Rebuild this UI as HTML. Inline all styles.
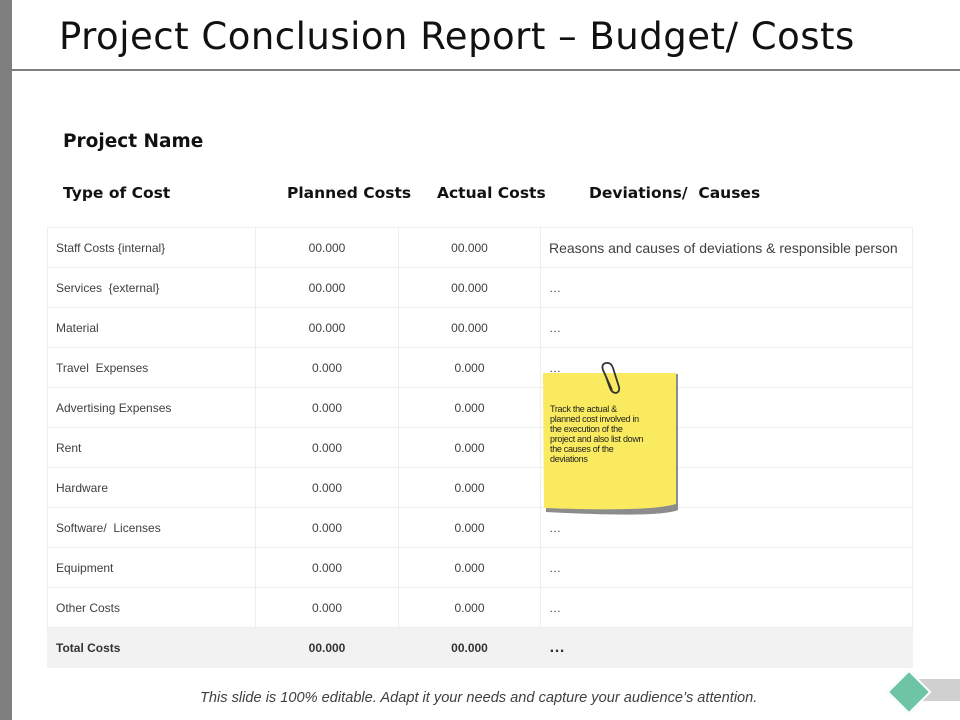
<!DOCTYPE html>
<html><head><meta charset="utf-8"><style>
body{margin:0;width:960px;height:720px;position:relative;background:#fff;overflow:hidden;font-family:"Liberation Sans",Arial,sans-serif}
.abs{position:absolute}
.bar{left:0;top:0;width:12px;height:720px;background:#7f7f7f}
.title{left:59px;top:15px;font-family:"DejaVu Sans",sans-serif;font-size:37px;color:#111;white-space:nowrap;letter-spacing:0.5px}
.hline{left:12px;top:69px;width:948px;height:2px;background:#7f7f7f}
.h{font-family:"DejaVu Sans",sans-serif;font-weight:bold;font-size:15.5px;color:#111;white-space:nowrap}
table{position:absolute;left:47px;top:227px;border-collapse:collapse;width:866px}
td{height:40px;border:1px solid #eee;font-size:12px;color:#404040;padding:0 8px;box-sizing:border-box}
td.c{text-align:center}
tr.tot td{background:#f2f2f2;font-weight:bold;color:#333;border-color:#f2f2f2}
</style></head><body>
<div class="abs bar"></div>
<div class="abs title">Project Conclusion Report – Budget/ Costs</div>
<div class="abs hline"></div>
<div class="abs h" style="left:63px;top:131px;font-size:18.5px">Project Name</div>
<div class="abs h" style="left:63px;top:184px">Type of Cost</div>
<div class="abs h" style="left:287px;top:184px">Planned Costs</div>
<div class="abs h" style="left:437px;top:184px">Actual Costs</div>
<div class="abs h" style="left:589px;top:184px">Deviations/&nbsp; Causes</div>
<table>
<colgroup><col style="width:208px"><col style="width:143px"><col style="width:142px"><col></colgroup>
<tr><td>Staff Costs {internal}</td><td class="c">00.000</td><td class="c">00.000</td><td style="font-size:14px">Reasons and causes of deviations &amp; responsible person</td></tr>
<tr><td>Services&nbsp; {external}</td><td class="c">00.000</td><td class="c">00.000</td><td>…</td></tr>
<tr><td>Material</td><td class="c">00.000</td><td class="c">00.000</td><td>…</td></tr>
<tr><td>Travel&nbsp; Expenses</td><td class="c">0.000</td><td class="c">0.000</td><td>…</td></tr>
<tr><td>Advertising Expenses</td><td class="c">0.000</td><td class="c">0.000</td><td>…</td></tr>
<tr><td>Rent</td><td class="c">0.000</td><td class="c">0.000</td><td>…</td></tr>
<tr><td>Hardware</td><td class="c">0.000</td><td class="c">0.000</td><td>…</td></tr>
<tr><td>Software/&nbsp; Licenses</td><td class="c">0.000</td><td class="c">0.000</td><td>…</td></tr>
<tr><td>Equipment</td><td class="c">0.000</td><td class="c">0.000</td><td>…</td></tr>
<tr><td>Other Costs</td><td class="c">0.000</td><td class="c">0.000</td><td>…</td></tr>
<tr class="tot"><td style="height:40px">Total Costs</td><td class="c">00.000</td><td class="c">00.000</td><td style="font-size:16px">…</td></tr>
</table>
<svg class="abs" style="left:540px;top:360px" width="145" height="165">
<path d="M5 14 H138 V150 Q120 158 6 152 Z" fill="#8c8c8c"/>
<path d="M3 13 H136 V144 Q110 152 4 148 Z" fill="#f9ea5f"/>
<path d="M72 30 L63 10 Q61 4 66 3 Q71 2 73 8 L79 27 Q80 32 76 33 Q72 33 70 28 L65 14" fill="none" stroke="#333" stroke-width="1.8"/>
</svg>
<div class="abs" style="left:550px;top:404px;width:120px;font-size:9px;line-height:10px;color:#222;letter-spacing:-0.3px">Track the actual &amp;<br>planned cost involved in<br>the execution of the<br>project and also list down<br>the causes of the<br>deviations</div>
<div class="abs" style="left:200px;top:690px;font-size:14.6px;font-style:italic;color:#404040">This slide is 100% editable. Adapt it your needs and capture your audience’s attention.</div>
<div class="abs" style="left:918px;top:679px;width:42px;height:22px;background:#d0d0d0"></div>
<div class="abs" style="left:893px;top:676px;width:28px;height:28px;background:#6ec5a5;transform:rotate(45deg);border:2px solid #fff"></div>
</body></html>
